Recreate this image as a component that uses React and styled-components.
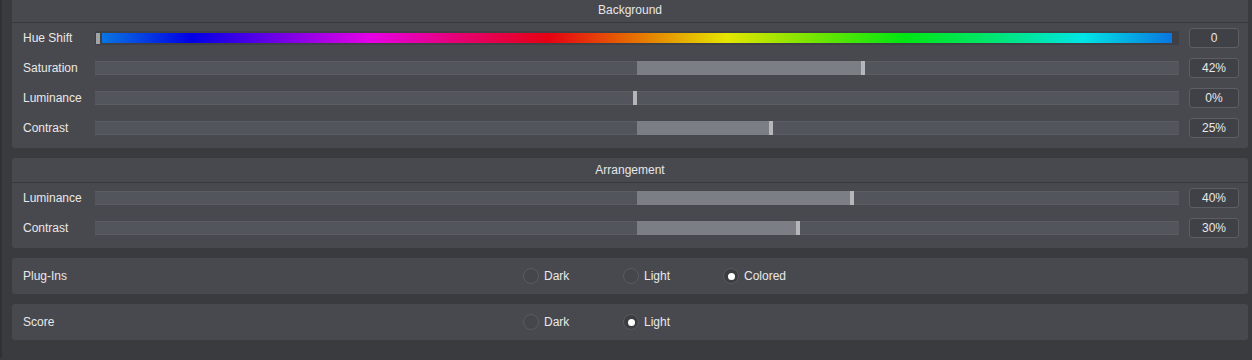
import styled, { createGlobalStyle } from "styled-components";

const GlobalStyle = createGlobalStyle`
  html, body {
    margin: 0;
    padding: 0;
    background: #3a3b3f;
    font-family: "Liberation Sans", Arial, sans-serif;
    font-size: 12px;
    color: #e8e8e8;
    overflow: hidden;
  }
`;

const Page = styled.div`
  width: 1252px;
  height: 360px;
  box-sizing: border-box;
  border-left: 2px solid #303135;
  padding: 0 4px 0 10px;
  display: flex;
  flex-direction: column;
  gap: 10px;
  margin-top: -2px;
`;

const Panel = styled.section`
  background: #48494e;
  border-radius: 3px;
  padding-bottom: ${(p) => (p.$flat ? "0" : "5px")};
`;

const Header = styled.div`
  height: 24px;
  line-height: 24px;
  text-align: center;
  border-bottom: 1px solid #37383c;
  color: #e6e6e6;
`;

const Row = styled.div`
  height: 30px;
  display: flex;
  align-items: center;
  padding: 0 9px 0 11px;
`;

const Label = styled.div`
  width: 72px;
  flex-shrink: 0;
`;

const Track = styled.div`
  position: relative;
  flex: 1;
  height: 14px;
  box-sizing: border-box;
  background: #52565c;
  border-top: 1px solid #5a5e64;
  border-bottom: 1px solid #5a5e64;
`;

const Fill = styled.div`
  position: absolute;
  left: 50%;
  top: -1px;
  bottom: -1px;
  background: #7b7e84;
`;

const Thumb = styled.div`
  position: absolute;
  top: -1px;
  bottom: -1px;
  width: 4px;
  background: #b4b6b9;
`;

const HueTrack = styled.div`
  position: relative;
  flex: 1;
  height: 14px;
  box-sizing: border-box;
  padding: 2px 7px 2px 7px;
  background: #3f4045;
`;

const HueGradient = styled.div`
  height: 100%;
  background: linear-gradient(
    to right,
    hsl(210, 92%, 46%) 0%,
    hsl(240, 100%, 45%) 8.33%,
    hsl(270, 100%, 45%) 16.67%,
    hsl(300, 100%, 45%) 25%,
    hsl(330, 100%, 45%) 33.33%,
    hsl(355, 100%, 45%) 41.67%,
    hsl(30, 100%, 45%) 50%,
    hsl(60, 100%, 45%) 58.33%,
    hsl(90, 100%, 45%) 66.67%,
    hsl(125, 100%, 45%) 75%,
    hsl(150, 100%, 45%) 83.33%,
    hsl(180, 100%, 45%) 91.67%,
    hsl(210, 92%, 46%) 100%
  );
`;

const HueThumb = styled.div`
  position: absolute;
  left: 1px;
  top: 2px;
  bottom: 1px;
  width: 4px;
  background: #a2a3a6;
`;

const ValueBox = styled.div`
  width: 50px;
  height: 20px;
  margin-left: 10px;
  flex-shrink: 0;
  box-sizing: border-box;
  border: 1px solid #5d5e63;
  border-radius: 3px;
  background: #404146;
  display: flex;
  align-items: center;
  justify-content: center;
`;

const OptionRow = styled.div`
  height: 36px;
  display: grid;
  grid-template-columns: 500px repeat(3, 100px);
  align-items: center;
  padding-left: 11px;
`;

const Option = styled.div`
  display: flex;
  align-items: center;
  gap: 5px;
`;

const Radio = styled.span`
  width: 16px;
  height: 16px;
  box-sizing: border-box;
  border-radius: 50%;
  border: 1px solid #5a5b60;
  background: ${(p) => (p.$on ? "#3c3d41" : "#45464b")};
  display: flex;
  align-items: center;
  justify-content: center;

  &::after {
    content: "";
    display: ${(p) => (p.$on ? "block" : "none")};
    width: 7px;
    height: 7px;
    border-radius: 50%;
    background: #ffffff;
  }
`;

function Slider({ label, value }) {
  const v = value / 100;
  return (
    <Row>
      <Label>{label}</Label>
      <Track>
        {value > 0 && <Fill style={{ width: `calc(50% * ${v} - 4px)` }} />}
        <Thumb style={{ left: `calc(50% - 4px + 50% * ${v})` }} />
      </Track>
      <ValueBox>{value}%</ValueBox>
    </Row>
  );
}

function Choice({ label, options, selected }) {
  return (
    <Panel $flat>
      <OptionRow>
        <Label>{label}</Label>
        {options.map((o) => (
          <Option key={o}>
            <Radio $on={o === selected} />
            {o}
          </Option>
        ))}
      </OptionRow>
    </Panel>
  );
}

export default function App() {
  return (
    <>
      <GlobalStyle />
      <Page>
        <Panel>
          <Header>Background</Header>
          <Row>
            <Label>Hue Shift</Label>
            <HueTrack>
              <HueGradient />
              <HueThumb />
            </HueTrack>
            <ValueBox>0</ValueBox>
          </Row>
          <Slider label="Saturation" value={42} />
          <Slider label="Luminance" value={0} />
          <Slider label="Contrast" value={25} />
        </Panel>
        <Panel>
          <Header>Arrangement</Header>
          <Slider label="Luminance" value={40} />
          <Slider label="Contrast" value={30} />
        </Panel>
        <Choice label="Plug-Ins" options={["Dark", "Light", "Colored"]} selected="Colored" />
        <Choice label="Score" options={["Dark", "Light"]} selected="Light" />
      </Page>
    </>
  );
}
